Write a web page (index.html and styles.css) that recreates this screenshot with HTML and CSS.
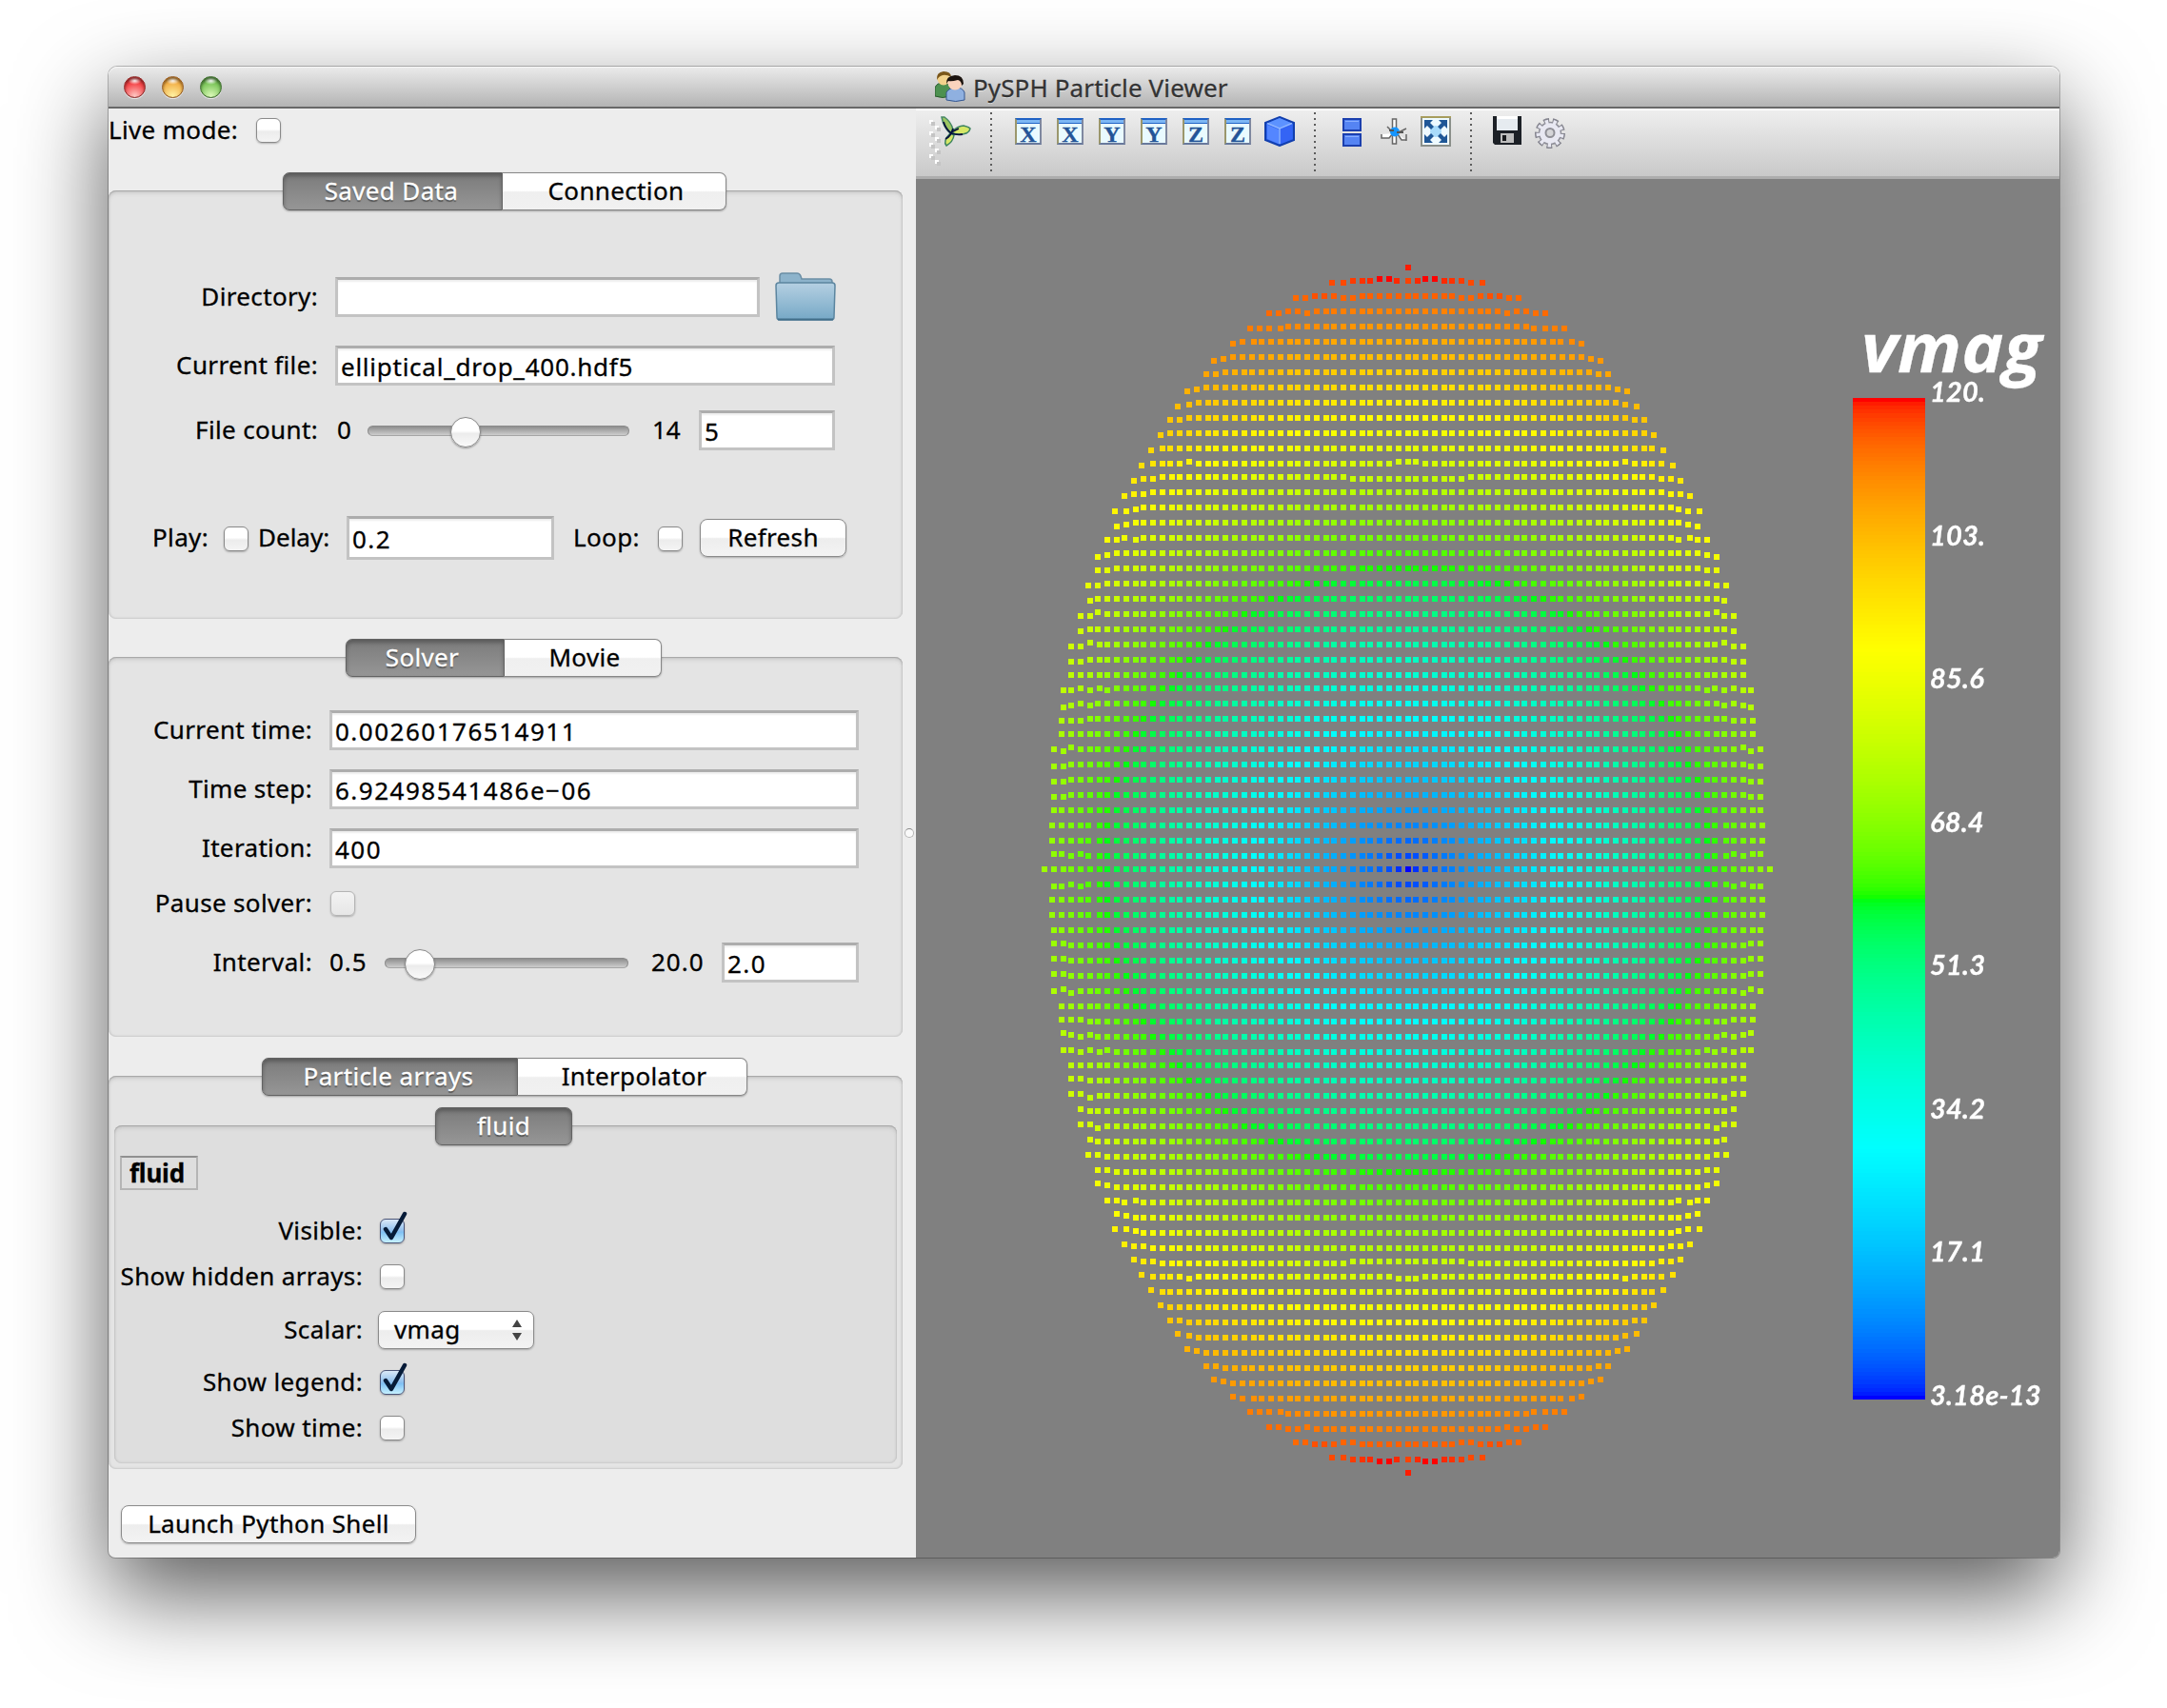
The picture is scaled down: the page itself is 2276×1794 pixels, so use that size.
FILE: index.html
```html
<!DOCTYPE html>
<html lang="en">
<head>
<meta charset="utf-8">
<title>PySPH Particle Viewer</title>
<link rel="stylesheet" href="styles.css">
</head>
<body>
<main class="window">
  <header class="titlebar">
    <div class="lights"><i class="light red"></i><i class="light amber"></i><i class="light green"></i></div>
    <svg class="app-icon" viewBox="0 0 32 32">
      <path d="M0 26V17q2-5 8-5t8 5v9q-8 3-16 0z" fill="#4d9150" stroke="#2b5a2d"/>
      <circle cx="9" cy="8" r="6.5" fill="#f2d28c"/><path d="M2 9q-1-8 7-9 8 0 8 6-5-3-9-2-4 1-6 5z" fill="#7a5619"/>
      <path d="M12 30v-8q3-5 10-5t9 5v8q-9 3-19 0z" fill="#8fb0e0" stroke="#35568f"/>
      <circle cx="21" cy="12" r="7.5" fill="#fad3bd"/><path d="M12 13q-1-8 9-9 9 0 9 9l-2 2q0-5-4-6-7 2-10 1z" fill="#1b130f"/>
    </svg>
    <h1 class="title">PySPH Particle Viewer</h1>
  </header>
  <div class="content">
    <aside class="panel">
      <div class="live"><span>Live mode:</span><i class="check"></i></div>

      <section class="group data">
        <div class="tabs"><b class="tab on">Saved Data</b><b class="tab">Connection</b></div>
        <div class="box">
          <div class="row dir"><label>Directory:</label><div class="field"></div>
            <svg class="folder" viewBox="0 0 64 52">
              <defs><linearGradient id="fg" x1="0" y1="0" x2="0" y2="1"><stop offset="0" stop-color="#b5d0e2"/><stop offset="1" stop-color="#76a8c6"/></linearGradient></defs>
              <path d="M5 12V4q0-3 3-3h15q3 0 4 3l1 3h29q3 0 3 3v4z" fill="#8db3cb" stroke="#6b8ea5" stroke-width="1.5"/>
              <path d="M1 14q0-3 3-3h56q3 0 3 3l-1 33q0 3-3 3H5q-3 0-3-3z" fill="url(#fg)" stroke="#5b859f" stroke-width="1.5"/>
              <path d="M3 49.5h58" stroke="#426f8a" stroke-width="2"/>
            </svg></div>
          <div class="row"><label>Current file:</label><div class="field wide name-field">elliptical_drop_400.hdf5</div></div>
          <div class="row"><label>File count:</label><span class="min">0</span><div class="slider"><i class="knob"></i></div><span class="max">14</span><div class="field small">5</div></div>
          <div class="play"><span class="w-play">Play:</span><i class="check"></i><span class="w-delay">Delay:</span><div class="field">0.2</div><span class="w-loop">Loop:</span><i class="check"></i><button class="button">Refresh</button></div>
        </div>
      </section>

      <section class="group solver">
        <div class="tabs"><b class="tab on">Solver</b><b class="tab">Movie</b></div>
        <div class="box">
          <div class="row"><label>Current time:</label><div class="field wide">0.00260176514911</div></div>
          <div class="row"><label>Time step:</label><div class="field wide">6.92498541486e−06</div></div>
          <div class="row"><label>Iteration:</label><div class="field wide">400</div></div>
          <div class="row pause"><label>Pause solver:</label><i class="check off"></i></div>
          <div class="row"><label>Interval:</label><span class="min">0.5</span><div class="slider"><i class="knob"></i></div><span class="max">20.0</span><div class="field small">2.0</div></div>
        </div>
      </section>

      <section class="group arrays">
        <div class="tabs"><b class="tab on">Particle arrays</b><b class="tab">Interpolator</b></div>
        <div class="box">
          <div class="group inner">
            <div class="tabs"><b class="tab on">fluid</b></div>
            <div class="box">
              <div class="name">fluid</div>
              <div class="row"><label>Visible:</label><i class="check ticked"><svg viewBox="0 0 32 36"><path d="M6 19l6 9L26 3" /></svg></i></div>
              <div class="row"><label>Show hidden arrays:</label><i class="check"></i></div>
              <div class="row scalar"><label>Scalar:</label><div class="popup"><span>vmag</span><svg viewBox="0 0 12 24"><path d="M6 1l5 8H1zM6 23l5-8H1z" fill="#444"/></svg></div></div>
              <div class="row"><label>Show legend:</label><i class="check ticked"><svg viewBox="0 0 32 36"><path d="M6 19l6 9L26 3" /></svg></i></div>
              <div class="row"><label>Show time:</label><i class="check"></i></div>
            </div>
          </div>
        </div>
      </section>
      <button class="button launch">Launch Python Shell</button>
      <i class="splitter"></i>
    </aside>

    <section class="viewer">
      <nav class="toolbar">
        <svg class="grip" viewBox="0 0 12 52">
          <g fill="#fff"><path d="M0 2h4v4H0zM6 8h4v4H6zM0 14h4v4H0zM6 20h4v4H6zM0 26h4v4H0zM6 32h4v4H6zM0 38h4v4H0zM6 44h4v4H6z"/></g>
          <g fill="#c4c4c4"><path d="M2 4h4v4H2zM8 10h4v4H8zM2 16h4v4H2zM8 22h4v4H8zM2 28h4v4H2zM8 34h4v4H8zM2 40h4v4H2zM8 46h4v4H8z"/></g>
        </svg>
        <svg class="i32 logo" viewBox="0 0 32 32">
          <path d="M1 1h3q7 5 9 13l-3 4Q3 12 1 1z" fill="#9cc662" stroke="#468766" stroke-width="1.500"/>
          <path d="M11 17q7-7 13-7 5 1 7 3-1 5-8 6-7 1-12-2z" fill="#d6e767" stroke="#3f8560" stroke-width="1.500"/>
          <path d="M10 18l4 2q-1 7-8 11-4-5 4-13z" fill="#d6e767" stroke="#3f8560" stroke-width="1.500"/>
          <path d="M3 6q2 7 8 12 6 2 12 1M13 13q-2 8-8 11M11 17l8-4" fill="none" stroke="#06103c" stroke-width="1.800"/>
        </svg>
        <i class="sep"></i>
        <span class="axis">X</span><span class="axis">X</span><span class="axis">Y</span><span class="axis">Y</span><span class="axis">Z</span><span class="axis">Z</span>
        <svg class="i32 cube" viewBox="0 0 32 32">
          <path d="M16 1l15 6v18l-15 6L1 25V7z" fill="#2b63ee" stroke="#123fae" stroke-width="2"/>
          <path d="M16 2l13 5.500-13 5L3 7.500z" fill="#5c92ff"/><path d="M3 9l12 5v15L3 24z" fill="#5486ff"/><path d="M17 14l12-5v15l-12 5z" fill="#3464f5"/>
          <path d="M3 7.500l13 5.500 13-5.500M16 13v16" fill="none" stroke="#8fb5ff" stroke-width="1.500"/>
        </svg>
        <i class="sep"></i>
        <svg class="panes" viewBox="0 0 20 30">
          <g fill="#5584f3" stroke="#1b3fae" stroke-width="2"><path d="M1 1h18v12H1zM1 17h18v12H1z"/></g>
          <path d="M3 3.500h14M3 19.500h14" stroke="#89aeff"/>
        </svg>
        <svg class="axes" viewBox="0 0 28 28">
          <g fill="#fff" stroke="#666" stroke-width="1.500"><path d="M12.500 1h4v10h-4zM12.500 18h4v9h-4z"/><path d="M1 17v4h8l4-5M27 11l-8 4M18 17l4 6h5M27 17v7M7 9l4 4"/></g>
          <circle cx="15" cy="14.500" r="5" fill="#1595ff"/><path d="M9 13h5M17 15h7" stroke="#555" stroke-width="2"/>
        </svg>
        <svg class="i32 full" viewBox="0 0 32 32">
          <path d="M1 1h30v30H1z" fill="#eefaff" stroke="#8a8f8a" stroke-width="2"/><path d="M0 1h32" stroke="#a79d5d" stroke-width="2"/>
          <circle cx="16" cy="16" r="6" fill="#a9dcfb"/>
          <g fill="#1f5796"><path d="M4 4h9l-3 3 4 4-3 3-4-4-3 3zM28 4h-9l3 3-4 4 3 3 4-4 3 3zM4 28h9l-3-3 4-4-3-3-4 4-3-3zM28 28h-9l3-3-4-4 3-3 4 4 3-3z"/></g>
        </svg>
        <i class="sep"></i>
        <svg class="save" viewBox="0 0 30 30">
          <path d="M0 0h30v30H2l-2-2z" fill="#1c2026"/><path d="M4 0h22v15H4z" fill="#e6ebf0"/><path d="M4 0h22v3H4z" fill="#fff"/>
          <path d="M8 18h14v10H8z" fill="#bdbdbd"/><path d="M10 20h4v6h-4z" fill="#17191c"/>
        </svg>
        <svg class="i32 gear" viewBox="0 0 32 32">
          <circle cx="16" cy="16" r="12.500" fill="none" stroke="#84848e" stroke-width="7" stroke-dasharray="5.327 3.400"/>
          <circle cx="16" cy="16" r="11.500" fill="#e8e8f2" stroke="#8e8e98" stroke-width="1.500"/>
          <circle cx="16" cy="16" r="12" fill="none" stroke="#e8e8f2" stroke-width="5" stroke-dasharray="3.300 5.078" stroke-dashoffset="-.9"/>
          <circle cx="16" cy="15.500" r="4.500" fill="#d5d5d8" stroke="#8f8f96" stroke-width="2"/>
        </svg>
      </nav>
      <div class="scene">
        <canvas id="particles" width="1201" height="1447"></canvas>
        <div class="legend">
          <div class="legend-title">vmag</div>
          <canvas id="bar" width="76" height="1052"></canvas>
          <ul class="scale"><li>120.</li><li>103.</li><li>85.6</li><li>68.4</li><li>51.3</li><li>34.2</li><li>17.1</li><li>3.18e-13</li></ul>
        </div>
      </div>
    </section>
  </div>
</main>
<script src="plot.js"></script>
</body>
</html>
```
FILE: styles.css
```css
* { box-sizing: border-box; }
body { margin: 0; height: 1794px; padding: 70px 0 0 114px; background: #fff; font-family: "Noto Sans", "Open Sans", sans-serif; font-size: 26px; line-height: 36px; color: #000; overflow: hidden; -webkit-text-stroke: .3px; }
i, b { font-style: normal; font-weight: 400; }
svg, canvas { display: block; flex: none; }
label, span, .tab, .button, .field, .title { white-space: nowrap; }

.window { width: 2049px; height: 1566px; border-radius: 9px 9px 7px 7px; box-shadow: 0 0 0 1px rgba(0,0,0,.25), 0 38px 96px rgba(0,0,0,.65); background: #ededed; }
.titlebar { position: relative; height: 44px; display: flex; align-items: center; border-radius: 9px 9px 0 0; background: linear-gradient(#ebebeb, #b4b4b4); border-bottom: 2px solid #686868; box-shadow: inset 0 1px #f7f7f7; }
.lights { display: flex; gap: 17px; margin-left: 16px; width: 852px; }
.light { width: 23px; height: 23px; border-radius: 50%; border: 1px solid; box-shadow: inset 0 2px 3px rgba(0,0,0,.45), 0 1px rgba(255,255,255,.6); }
.red { background: radial-gradient(ellipse 7px 4px at 50% 18%, #fff, transparent), radial-gradient(circle at 50% 95%, #ffc9c5, #f4474a 60%, #c81d20); border-color: #8f2a28; }
.amber { background: radial-gradient(ellipse 7px 4px at 50% 18%, #fff, transparent), radial-gradient(circle at 50% 95%, #fff3a4, #f3b34c 60%, #cf7d1c); border-color: #95591d; }
.green { background: radial-gradient(ellipse 7px 4px at 50% 18%, #fff, transparent), radial-gradient(circle at 50% 95%, #dcfbb9, #7fc75d 60%, #42862e); border-color: #3c6b2c; }
.app-icon { width: 32px; height: 32px; }
.title { margin: 0 0 0 8px; padding-top: 1px; font-size: 26px; font-weight: 400; color: #333; letter-spacing: .12px; text-shadow: 0 1px rgba(255,255,255,.5); }

.content { display: flex; height: 1522px; }
.panel { position: relative; width: 848px; letter-spacing: .35px; }
.live { display: flex; align-items: center; height: 46px; margin-bottom: 21px; }
.live span { width: 155px; }
.live span, .row label, .row > span, .play > span { padding-bottom: 2px; }
.check { flex: none; width: 26px; height: 26px; border-radius: 6px; border: 1.500px solid #8a8a8a; background: linear-gradient(#fff 45%, #ececec 55%, #f4f4f4); box-shadow: 0 1px 2px rgba(0,0,0,.25); }
.check.off { border-color: #b4b4b4; background: linear-gradient(#f3f3f3, #e6e6e6); }
.check.ticked { border-color: #4b5578; background: linear-gradient(#dbe9f8, #8dbfee 50%, #7fc0f3 55%, #c6f1ff); }
.ticked svg { width: 32px; height: 36px; margin: -9px 0 0 -1px; }
.ticked path { fill: none; stroke: #061b38; stroke-width: 4.500; stroke-linecap: round; stroke-linejoin: round; }

.tabs { position: relative; z-index: 1; display: flex; width: max-content; height: 40px; margin-bottom: -21px; border-radius: 7px; box-shadow: 0 1px 2px rgba(0,0,0,.3); }
.tab { display: flex; align-items: center; justify-content: center; padding: 0 0 2px 4px; border: 1.500px solid #878787; border-left: 0; background: linear-gradient(#fff 48%, #efefef 52%, #f1f1f1); border-radius: 0 7px 7px 0; }
.tab.on { padding-left: 0; padding-right: 3px; color: #fff; border: 1.500px solid #636363; border-radius: 7px 0 0 7px; background: linear-gradient(#7b7b7b, #969696); box-shadow: inset 0 3px 4px rgba(0,0,0,.28); text-shadow: 0 2px 1px rgba(0,0,0,.4); }
.tab.on:only-child { border-radius: 7px; padding-right: 0; }
.box { width: 834px; border-radius: 8px; background: #e4e4e4; box-shadow: inset 0 1px 1px #a6a6a6, inset 0 0 2px 1px #c9c9c9, inset 0 4px 5px -2px #c2c2c2; }
.row { display: flex; align-items: center; }
.row label { text-align: right; margin-right: 18px; flex: none; }
.field { flex: none; height: 42px; padding: 1px 3px 0; background: #fff; border: 3px solid #c3c3c3; border-top-color: #adadad; box-shadow: inset 0 2px 2px #eee; line-height: 36px; letter-spacing: 1.5px; }
.name-field { letter-spacing: .75px; }
.button { height: 40px; padding: 0 0 2px; border: 1.500px solid #8a8a8a; border-radius: 8px; background: linear-gradient(#fff 48%, #ededed 52%, #f3f3f3); box-shadow: 0 1px 2px rgba(0,0,0,.25); font: inherit; letter-spacing: inherit; color: #000; line-height: 35px; }
.slider { flex: none; height: 11px; border-radius: 6px; border: 1px solid #8b8b8b; border-bottom-color: #a5a5a5; background: linear-gradient(#8e8e8e, #cdcdcd); }
.knob { display: block; width: 32px; height: 32px; margin-top: -10px; border-radius: 50%; border: 1.500px solid #8a8a8a; background: linear-gradient(#fff 45%, #ececec 55%, #fafafa); box-shadow: 0 1px 2px rgba(0,0,0,.35); }

.data .tabs { margin-left: 183px; }
.data .tab { width: 235px; } .data .tab.on { width: 231px; }
.data .box { height: 450px; padding-top: 86px; }
.data .row { height: 42px; margin-bottom: 26px; }
.data .row.dir { height: 51px; }
.data .row label { width: 220px; }
.data .dir .field { width: 446px; }
.folder { width: 64px; height: 52px; margin-left: 16px; }
.data .wide { width: 525px; }
.data .min { width: 32px; margin-left: 2px; }
.data .slider { width: 275px; } .data .knob { margin-left: 86px; }
.data .max { width: 73px; padding-left: 24px; letter-spacing: 0; }
.data .small { width: 143px; }
.play { display: flex; align-items: center; height: 46px; margin-top: 69px; padding-left: 46px; }
.play .field { width: 218px; height: 46px; line-height: 40px; }
.play .check { margin-top: 2px; }
.w-play { width: 75px; } .w-delay { width: 93px; margin-left: 10px; letter-spacing: 0; } .w-loop { width: 89px; margin-left: 20px; }
.play .button { width: 154px; margin-left: 18px; }

.solver { margin-top: 21px; }
.solver .tabs { margin-left: 249px; }
.solver .tab { width: 165px; } .solver .tab.on { width: 167px; padding-right: 6px; }
.solver .box { height: 399px; padding-top: 56px; }
.solver .row { height: 42px; margin-bottom: 20px; }
.solver .row label { width: 214px; }
.solver .wide { width: 556px; }
.solver .pause { height: 34px; margin-bottom: 24px; }
.solver .min { width: 58px; letter-spacing: 1px; }
.solver .slider { width: 256px; } .solver .knob { margin-left: 20px; }
.solver .max { width: 98px; padding-left: 24px; letter-spacing: 1px; }
.solver .small { width: 144px; }
.solver .row > .check { margin-left: 1px; }

.arrays { margin-top: 22px; }
.arrays > .tabs { margin-left: 161px; }
.arrays .tab { width: 241px; } .arrays .tab.on { width: 269px; }
.arrays > .box { height: 413px; padding: 33px 6px 0; }
.inner .tabs { margin-left: 337px; }
.inner .tabs .tab.on { width: 144px; }
.inner .box { width: 822px; height: 355px; padding: 32px 6px; background: #dedede; }
.name { width: 82px; height: 36px; margin-bottom: 22px; border: 2px solid #b5b5b5; border-top-color: #909090; line-height: 33px; padding-left: 8px; font-weight: 700; letter-spacing: -.2px; }
.inner .row { height: 42px; margin-bottom: 6px; }
.inner .row label { width: 255px; }
.inner .row.scalar { height: 40px; margin: 15px 0 14px; }
.popup { display: flex; justify-content: space-between; align-items: center; width: 164px; height: 40px; margin-left: -2px; padding: 0 11px 0 16px; border: 1.500px solid #8a8a8a; border-radius: 7px; background: linear-gradient(#fff 48%, #ededed 52%, #f3f3f3); box-shadow: 0 1px 2px rgba(0,0,0,.25); }
.popup span { padding-bottom: 2px; }
.popup svg { width: 12px; height: 24px; }
.launch { display: block; width: 310px; margin: 38px 0 0 13px; }
.splitter { position: absolute; left: 836px; top: 756px; width: 10px; height: 10px; border-radius: 50%; border: 1px solid #b5b5b5; border-top-color: #888; background: #fafafa; }

.viewer { width: 1201px; }
.toolbar { position: relative; display: flex; height: 74px; padding: 8px 0 0 14px; border-top: 2px solid #fff; border-bottom: 3px solid #adadad; background: linear-gradient(#eee, #c9c9c9); align-items: flex-start; }
.grip { width: 12px; height: 52px; }
.i32 { width: 32px; height: 32px; margin-top: -2px; }
.sep { width: 2px; height: 62px; margin-top: -6px; background: repeating-linear-gradient(#5c5c5c 0 2px, transparent 2px 6px); }
.logo + .sep { margin-left: 20px; margin-right: 24px; }
.axis { width: 28px; height: 28px; margin-right: 16px; border: 2px solid; border-color: #1f61c4 #7f88a0 #68799c #9b976c; background: linear-gradient(#7db7f4 0 3px, #2164c5 3px 4px, #e9faff 4px); font: 700 24px/24px "Liberation Serif", serif; color: #235497; text-align: center; padding-top: 3px; letter-spacing: 0; }
.cube { margin-left: -2px; }
.cube + .sep { margin-left: 20px; margin-right: 28px; }
.panes { width: 20px; height: 30px; margin-right: 20px; }
.axes { width: 28px; height: 28px; margin-right: 14px; }
.full + .sep { margin-left: 20px; margin-right: 22px; }
.save { width: 30px; height: 30px; margin: -2px 14px 0 0; }
.gear { margin-top: 0; }

.scene { position: relative; height: 1448px; background: #808080; border-radius: 0 0 7px 0; overflow: hidden; }
.legend { position: absolute; left: 984px; top: 120px; width: 217px; color: #fff; }
.legend-title { position: absolute; left: 9px; top: 1px; font: italic 700 71px/110px "Open Sans", sans-serif; transform: scaleX(1.045); transform-origin: 0 0; }
#bar { position: absolute; left: 0; top: 110px; }
.scale { position: absolute; left: 81px; top: 88px; height: 1084px; margin: 0; padding: 0; list-style: none; display: flex; flex-direction: column; justify-content: space-between; font: italic 700 29px/30px Lato, sans-serif; letter-spacing: .2px; }
```
FILE: plot.js
```js
// Colour table: hue runs blue to red, with a display gamma on each channel.
function colour(t) {
  t = Math.min(255, Math.floor(Math.max(0, t) * 256)) / 255;
  const h = (1 - t) * 4;
  const up = v => Math.round(255 * Math.pow(Math.max(0, Math.min(1, v)), 0.53));
  const r = up(2 - h), g = up(h < 2 ? h : 4 - h), b = up(h - 2);
  return `rgb(${r},${g},${b})`;
}

const bar = document.getElementById('bar').getContext('2d');
for (let y = 0; y < 1052; y++) {
  bar.fillStyle = colour(1 - (y + 0.5) / 1052);
  bar.fillRect(0, y, 76, 1);
}

// Each row: [last column, columns nudged toward the middle (i:px), columns pushed outward by 2px each time listed]
const rows = [
  [40, {}, []],
  [39, {36: -2, 38: -2, 39: -2}, [35, 38]],
  [39, {}, [35, 38, 39]],
  [39, {}, [35, 38, 39]],
  [39, {}, [38]],
  [39, {38: 2, 39: 2}, []],
  [39, {38: 2, 39: 2}, []],
  [39, {38: 2, 39: 2}, []],
  [39, {37: -2, 38: 2}, [34]],
  [38, {}, [34, 38]],
  [38, {36: 2, 37: 2, 38: 2}, [34, 38]],
  [38, {35: 2, 37: 2, 38: 4}, [34]],
  [38, {33: 2, 35: 2, 37: 2, 38: 2}, []],
  [37, {}, []],
  [37, {36: 2, 37: 2}, []],
  [37, {35: -2, 36: 2, 37: 2}, []],
  [36, {36: 2}, [34]],
  [36, {34: -2, 35: 2, 36: 2}, [34]],
  [35, {35: 2}, [34]],
  [35, {34: 2, 35: 2}, [34, 35]],
  [34, {33: 2, 34: 2}, [34]],
  [34, {33: 2, 34: 4}, [34]],
  [33, {30: 2, 32: 2, 33: 2}, [31]],
  [32, {31: 2, 32: 4}, []],
  [32, {30: 2, 31: 4, 32: 4}, [32]],
  [31, {29: 2, 30: 2, 31: 4}, [30, 31]],
  [30, {28: 2, 29: 2, 30: 4}, [30]],
  [29, {24: -2, 29: 2}, [26, 29]],
  [28, {28: 2}, [26, 28]],
  [27, {27: 2}, [26, 27]],
  [26, {25: 2, 26: 2}, [26]],
  [25, {24: 2, 25: 4}, [25]],
  [24, {23: 2, 24: 4}, [22, 23, 24]],
  [22, {21: 2, 22: 2}, [17, 22]],
  [21, {20: 2, 21: 4}, [17, 18, 19, 20, 21]],
  [19, {19: 2}, [18, 19]],
  [17, {14: 2, 15: 2, 16: 2, 17: 2}, [13, 15, 16, 17, 17]],
  [15, {11: 2, 14: 2, 15: 2}, [13, 14, 15]],
  [12, {6: 2, 7: 2, 11: 2, 12: 2}, [9, 10, 11, 12]],
  [8, {2: -2, 3: -2, 7: 2, 8: 2}, [1, 8]],
  [0, {}, []]
];
// Speeds on the last rows at the tip of the drop, which run above the smooth field
const tip = {
  38: [0.96, 0.96, 0.96, 0.96, 0.96, 0.96, 0.955, 0.955, 0.962, 0.972, 0.972, 0.956, 0.952],
  39: [0.98, 0.99, 1, 1, 0.992, 0.988, 0.982, 0.973, 0.973],
  40: [0.995]
};

const plot = document.getElementById('particles').getContext('2d');
const cx = 1479 - 962, cy = 913 - 188;
rows.forEach(([last, nudge, wide], j) => {
  const down = j <= 12 ? 16 * j : j <= 25 ? 16 * j - 2 : j === 26 ? 414 : j < 39 ? 16 * j - 4 : j === 39 ? 620 : 634;
  for (let i = 0; i <= last; i++) {
    let dx = 2 * Math.floor(9.522 * i / 2);
    if (i === 21 && (j > 18 || j < 6)) dx += 2;
    dx += 2 * wide.filter(c => c === i).length;
    let dy = down - (nudge[i] || 0);
    if (j === 26 && i < 7) dy -= 2;
    if (j === 27 && i < 2) dy += 2;
    const t = tip[j] ? tip[j][i] : Math.hypot(dx, dy) / 634;
    plot.fillStyle = colour(t);
    const xs = i ? [dx, -dx - 2] : [0];
    const ys = j ? [dy, 2 - dy] : [0];
    for (const x of xs) for (const y of ys) plot.fillRect(cx + x - 3, cy + y - 3, 6, 6);
  }
});
```
